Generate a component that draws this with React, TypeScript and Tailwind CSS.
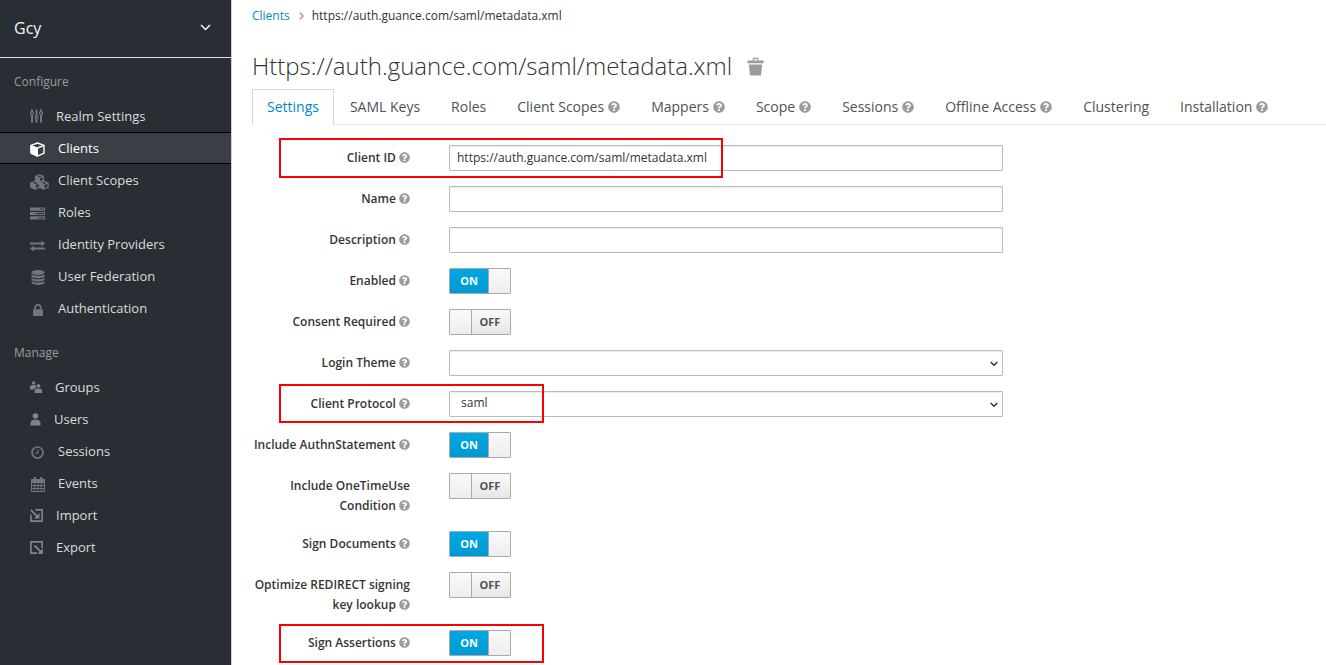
import { useState } from "react";
import type { ReactNode } from "react";
import { FaQuestionCircle } from "react-icons/fa";

const icons = {
  sliders: (
    <svg viewBox="0 0 13 14" width="13" height="14" fill="none" stroke="currentColor">
      <path d="M2 .5v2M2 6v7.5M6.5 .5v6.5M6.5 10.5v3M11 .5v2M11 6v7.5" strokeWidth="2" />
      <circle cx="2" cy="4.2" r="1.5" strokeWidth="1.2" />
      <circle cx="6.5" cy="8.8" r="1.5" strokeWidth="1.2" />
      <circle cx="11" cy="4.2" r="1.5" strokeWidth="1.2" />
    </svg>
  ),
  cube: (
    <svg viewBox="0 0 15 15" width="15" height="15" fill="none" stroke="currentColor" strokeLinejoin="round">
      <path d="M7.5 1 14 3.4v7.8L7.5 14.2 1 11.2V3.4z" strokeWidth="1.4" />
      <path d="M1 3.4 7.5 6v8.2L1 11.2z" fill="currentColor" strokeWidth="1" />
      <path d="M7.5 6 14 3.4" strokeWidth="1.4" />
    </svg>
  ),
  cubes: (
    <svg viewBox="0 0 19 16" width="19" height="16" fill="none" stroke="currentColor" strokeLinejoin="round" strokeWidth="1.3">
      <path d="M9.5 .9 13.3 2.4v4L9.5 8 5.7 6.4v-4zM5.7 2.4 9.5 4l3.8-1.6" />
      <path d="M5.7 2.4 9.5 4v4L5.7 6.4z" fill="currentColor" />
      <path d="M5.2 7.4 9.2 9v4.2l-4 1.8-4.3-1.8V9zM.9 9l4.3 1.7L9.2 9" />
      <path d="M.9 9l4.3 1.7V15L.9 13.2z" fill="currentColor" />
      <path d="M13.8 7.4 18.1 9v4.2L13.8 15l-4-1.8V9zM9.8 9l4 1.7L18.1 9" />
      <path d="M9.8 9l4 1.7V15l-4-1.8z" fill="currentColor" />
    </svg>
  ),
  server: (
    <svg viewBox="0 0 15 13" width="15" height="13">
      <path fill="currentColor" d="M0 .5h15v3.2H0zM0 4.9h15v3.2H0zM0 9.3h15v3.2H0z" />
      <path fill="#292e34" d="M10 1.6h4v1h-4zM5.5 6h8.5v1H5.5zM8.5 10.4h5.5v1H8.5z" />
    </svg>
  ),
  exchange: (
    <svg viewBox="0 0 15 12" width="15" height="12" fill="currentColor">
      <path d="M0 2.5h11.3V.6L15 3.5l-3.7 2.9V4.5H0zM15 7.5H3.7V5.6L0 8.5l3.7 2.9V9.5H15z" />
    </svg>
  ),
  database: (
    <svg viewBox="0 0 14 15" width="14" height="15" fill="currentColor">
      <ellipse cx="7" cy="2.5" rx="6.5" ry="2.5" />
      <path d="M.5 4.200C2 5.400 4.300 5.800 7 5.800s5-.4 6.500-1.600V6c0 1.300-2.900 2.300-6.500 2.300S.5 7.300.5 6zM.5 7.700C2 8.800 4.300 9.200 7 9.200s5-.4 6.500-1.500v1.600c0 1.300-2.900 2.300-6.500 2.300S.5 10.600.5 9.300zM.5 11C2 12.100 4.300 12.500 7 12.500s5-.4 6.500-1.500v1.600c0 1.300-2.900 2.300-6.500 2.300S.5 13.900.5 12.600z" />
    </svg>
  ),
  lock: (
    <svg viewBox="0 0 10 12" width="10" height="12">
      <rect x="0" y="5.200" width="10" height="6.800" rx=".8" fill="currentColor" />
      <path d="M2.200 5.500V3.700a2.800 2.800 0 0 1 5.600 0v1.800" fill="none" stroke="currentColor" strokeWidth="1.600" />
    </svg>
  ),
  groups: (
    <svg viewBox="0 0 12 12" width="12" height="12" fill="currentColor">
      <circle cx="3.700" cy="1.900" r="1.700" />
      <circle cx="8.500" cy="4.800" r="1.900" />
      <path d="M0 8.600V6.700c0-1.600 1-2.600 2.600-2.600h2.600c.5 0 .8.300.9.600-.3 1.100-.1 1.700.2 2.300-1.300.2-2 .8-2.300 1.600zM4.700 12v-1.800c0-1.500 1-2.600 2.500-2.600h2.400c1.500 0 2.400 1.100 2.400 2.600V12z" />
    </svg>
  ),
  user: (
    <svg viewBox="0 0 11 13" width="11" height="13" fill="currentColor">
      <circle cx="5.500" cy="3" r="2.800" />
      <path d="M.5 12.500v-2c0-2.200 1.300-3.700 3.300-3.700h3.400c2 0 3.300 1.500 3.300 3.700v2z" />
    </svg>
  ),
  clock: (
    <svg viewBox="0 0 13 13" width="13" height="13" fill="none" stroke="currentColor">
      <circle cx="6.500" cy="6.500" r="5.500" strokeWidth="1.700" />
      <path d="M7 3.500v3.400H4.400" strokeWidth="1.100" />
    </svg>
  ),
  calendar: (
    <svg viewBox="0 0 14 15" width="14" height="15" fill="none" stroke="currentColor">
      <path d="M.5 2.500h13v12H.5zM.5 5.500h13M.5 8.500h13M.5 11.500h13M3.800 5.500v9M7 5.500v9M10.200 5.500v9" strokeWidth="1" />
      <path d="M.5 2.500h13v2.500H.5z" fill="currentColor" />
      <path d="M3.800 0v3.800M10.200 0v3.800" strokeWidth="2.200" />
    </svg>
  ),
  importArrow: (
    <svg viewBox="0 0 13 13" width="13" height="13" fill="none" stroke="currentColor" strokeWidth="1.600">
      <path d="M5.500 .9h6.600v11.200H.9V5.500" />
      <path d="M.8.8l7 7" strokeWidth="1.800" />
      <path d="M9.500 4v5.500H4z" fill="currentColor" stroke="none" />
    </svg>
  ),
  exportArrow: (
    <svg viewBox="0 0 13 13" width="13" height="13" fill="none" stroke="currentColor" strokeWidth="1.600">
      <path d="M7 12.100H.9V.9h11.200V7" />
      <path d="M4.500 4.500l6.500 6.500" strokeWidth="1.800" />
      <path d="M12.900 7.500v5.400H7.500z" fill="currentColor" stroke="none" />
    </svg>
  ),
};

type NavItem = { label: string; icon: keyof typeof icons; box: string; active?: boolean };

const wide = "w-[15px] justify-center pt-px text-[#72767b]";
const narrow = "justify-center pb-0.5 text-[#808488]";
const configure: NavItem[] = [
  { label: "Realm Settings", icon: "sliders", box: "w-[13px] justify-center pb-0.5 text-[#72767b]" },
  { label: "Clients", icon: "cube", box: "w-[15px] justify-center pt-px text-white", active: true },
  { label: "Client Scopes", icon: "cubes", box: "w-[15px] justify-start pt-px text-[#72767b]" },
  { label: "Roles", icon: "server", box: wide },
  { label: "Identity Providers", icon: "exchange", box: wide },
  { label: "User Federation", icon: "database", box: wide },
  { label: "Authentication", icon: "lock", box: wide },
];
const manage: NavItem[] = [
  { label: "Groups", icon: "groups", box: "w-[12px] " + narrow },
  { label: "Users", icon: "user", box: "w-[11px] " + narrow },
  { label: "Sessions", icon: "clock", box: wide },
  { label: "Events", icon: "calendar", box: wide },
  { label: "Import", icon: "importArrow", box: "w-[13px] " + narrow },
  { label: "Export", icon: "exportArrow", box: "w-[13px] " + narrow },
];

function NavGroup({ title, items }: { title: string; items: NavItem[] }) {
  return (
    <section>
      <h2 className="px-3.5 text-[12px] leading-5 text-[#9c9c9c]">{title}</h2>
      <ul className="mt-2">
        {items.map((item) => (
          <li key={item.label}>
            <a
              href={"#" + item.label.toLowerCase().replace(" ", "-")}
              className={
                item.active
                  ? "flex h-8 items-center gap-[13px] border-y border-black bg-[#393f44] pt-0.5 pl-[30px] text-[13px] font-medium text-white"
                  : "flex h-8 items-center gap-[13px] pt-0.5 pl-[30px] text-[13px] text-[#dbdbdb]"
              }
            >
              <span className={"flex shrink-0 [&>svg]:shrink-0 " + item.box}>{icons[item.icon]}</span>
              {item.label}
            </a>
          </li>
        ))}
      </ul>
    </section>
  );
}

const tabs = [
  { label: "Settings", active: true },
  { label: "SAML Keys" },
  { label: "Roles" },
  { label: "Client Scopes", help: true },
  { label: "Mappers", help: true },
  { label: "Scope", help: true },
  { label: "Sessions", help: true },
  { label: "Offline Access", help: true },
  { label: "Clustering" },
  { label: "Installation", help: true },
];

function Row({ id, label, outline, children }: { id: string; label: string; outline?: string; children: ReactNode }) {
  return (
    <div className="relative flex items-start gap-[39px]">
      <label htmlFor={id} className="w-[158px] shrink-0 pt-[3px] text-right text-[12px] leading-5 font-semibold text-[#363636]">
        {label}
        {"\u00a0"}
        <FaQuestionCircle className="inline-block size-[11px] align-[-1px] text-[#9c9c9c]" />
      </label>
      {children}
      {outline && <div className={"pointer-events-none absolute left-[27px] border-2 border-[#f00] " + outline} />}
    </div>
  );
}

const field =
  "h-[26px] w-full rounded-[1px] border border-[#bbb] bg-white pb-0.5 text-[12px] text-[#333] shadow-[inset_0_1px_1px_rgba(0,0,0,0.075)]";

function TextRow({ id, label, value, outline }: { id: string; label: string; value?: string; outline?: string }) {
  return (
    <Row id={id} label={label} outline={outline}>
      <div className="max-w-[554px] flex-1">
        <input id={id} type="text" defaultValue={value} className={field + " block px-[7px]"} />
      </div>
    </Row>
  );
}

function SelectRow({ id, label, options, outline }: { id: string; label: string; options: string[]; outline?: string }) {
  return (
    <Row id={id} label={label} outline={outline}>
      <div className="relative max-w-[554px] flex-1">
        <select id={id} className={field + " block appearance-none px-[11px]"}>
          {options.map((o) => (
            <option key={o}>{o}</option>
          ))}
        </select>
        <svg viewBox="0 0 8 6" className="pointer-events-none absolute top-[11px] right-[5px] h-1.5 w-2" fill="none" stroke="#333" strokeWidth="1.500">
          <path d="M.7 1 4 4.300 7.300 1" />
        </svg>
      </div>
    </Row>
  );
}

function SwitchRow({ id, label, initial, outline }: { id: string; label: string; initial: boolean; outline?: string }) {
  const [on, setOn] = useState(initial);
  return (
    <Row id={id} label={label} outline={outline}>
      <label className="relative flex h-[26px] w-[62px] cursor-pointer overflow-hidden rounded-[1px] border border-[#aaa] text-[11px] leading-6 font-bold">
        <input id={id} type="checkbox" checked={on} onChange={(e) => setOn(e.target.checked)} className="sr-only" />
        {on ? (
          <>
            <span className="w-[38px] bg-linear-to-b from-[#00a8e1] to-[#0099d3] text-center text-white">ON</span>
            <span className="flex-1 border-l border-[#aaa] bg-linear-to-b from-[#fafafa] to-[#ededed]" />
          </>
        ) : (
          <>
            <span className="w-[22px] border-r border-[#aaa] bg-linear-to-b from-[#fafafa] to-[#ededed]" />
            <span className="flex-1 bg-linear-to-b from-[#fafafa] to-[#e6e6e6] pr-0.5 text-center text-[#4d5258]">OFF</span>
          </>
        )}
      </label>
    </Row>
  );
}

export default function App() {
  return (
    <div className="flex min-h-screen bg-white font-['Open_Sans',sans-serif] text-[12px] text-[#333]">
      <aside className="w-[232px] shrink-0 border-r border-[#d1d1d1] bg-[#292e34]">
        <button type="button" className="flex h-[58px] w-full items-center justify-between border-b border-[#dadada] pr-5 pb-0.5 pl-3.5 text-[16px] text-[#f5f5f5]">
          Gcy
          <svg viewBox="0 0 11 7" width="11" height="7" fill="none" stroke="currentColor" strokeWidth="1.500">
            <path d="M1 1l4.500 4.500L10 1" />
          </svg>
        </button>
        <nav className="flex flex-col gap-[19px] pt-3.5">
          <NavGroup title="Configure" items={configure} />
          <NavGroup title="Manage" items={manage} />
        </nav>
      </aside>

      <main className="min-w-0 flex-1 pl-5">
        <ol className="flex items-center pt-1.5 leading-5">
          <li>
            <a href="#clients" className="text-[#0088ce]">Clients</a>
          </li>
          <li className="flex items-center">
            <svg viewBox="0 0 5 8" className="mr-2 ml-[9px] h-2 w-[5px]" fill="none" stroke="#9c9c9c" strokeWidth="1.400">
              <path d="M.8.8 4 4 .8 7.200" />
            </svg>
            https://auth.guance.com/saml/metadata.xml
          </li>
        </ol>

        <div className="mt-6 flex items-center gap-[15px]">
          <h1 className="text-[24px] leading-8 font-light">Https://auth.guance.com/saml/metadata.xml</h1>
          <button type="button" aria-label="Delete client" className="pt-px text-[#9c9c9c]">
            <svg viewBox="0 0 17 19" width="17" height="19" fill="currentColor">
              <path d="M.5 3.500h16v2.800H.5zM1.800 7.400h13.400L14 18.500H3z" />
              <path d="M6.300 3.500V1.300h4.400v2.200" fill="none" stroke="currentColor" strokeWidth="1.300" />
            </svg>
          </button>
        </div>

        <nav className="mt-[7px] flex gap-px border-b border-[#ededed]">
          {tabs.map((t) => (
            <a
              key={t.label}
              href={"#" + t.label.toLowerCase().replace(" ", "-")}
              className={
                t.active
                  ? "-mb-px flex h-9 items-center border border-b-0 border-[#d8d8d8] bg-white px-3.5 pb-0.5 text-[14px] font-medium whitespace-nowrap text-[#0088ce]"
                  : "flex h-[35px] items-center gap-1 border-x border-transparent px-3.5 text-[14px] whitespace-nowrap text-[#4d5258]"
              }
            >
              {t.label}
              {t.help && <FaQuestionCircle className="size-3 text-[#9c9c9c]" />}
            </a>
          ))}
        </nav>

        <form className="flex flex-col gap-[15px] pt-5">
          <TextRow id="client-id" label="Client ID" value="https://auth.guance.com/saml/metadata.xml" outline="-top-[7px] h-10 w-[444px]" />
          <TextRow id="name" label="Name" />
          <TextRow id="description" label="Description" />
          <SwitchRow id="enabled" label="Enabled" initial={true} />
          <SwitchRow id="consent-required" label="Consent Required" initial={false} />
          <SelectRow id="login-theme" label="Login Theme" options={[""]} />
          <SelectRow id="client-protocol" label="Client Protocol" options={["saml", "openid-connect"]} outline="-top-[7px] h-[39px] w-[265px]" />
          <SwitchRow id="authn-statement" label="Include AuthnStatement" initial={true} />
          <SwitchRow id="one-time-use" label="Include OneTimeUse Condition" initial={false} />
          <SwitchRow id="sign-documents" label="Sign Documents" initial={true} />
          <SwitchRow id="optimize-redirect" label="Optimize REDIRECT signing key lookup" initial={false} />
          <SwitchRow id="sign-assertions" label="Sign Assertions" initial={true} outline="-top-1.5 h-[39px] w-[265px]" />
        </form>
      </main>
    </div>
  );
}
